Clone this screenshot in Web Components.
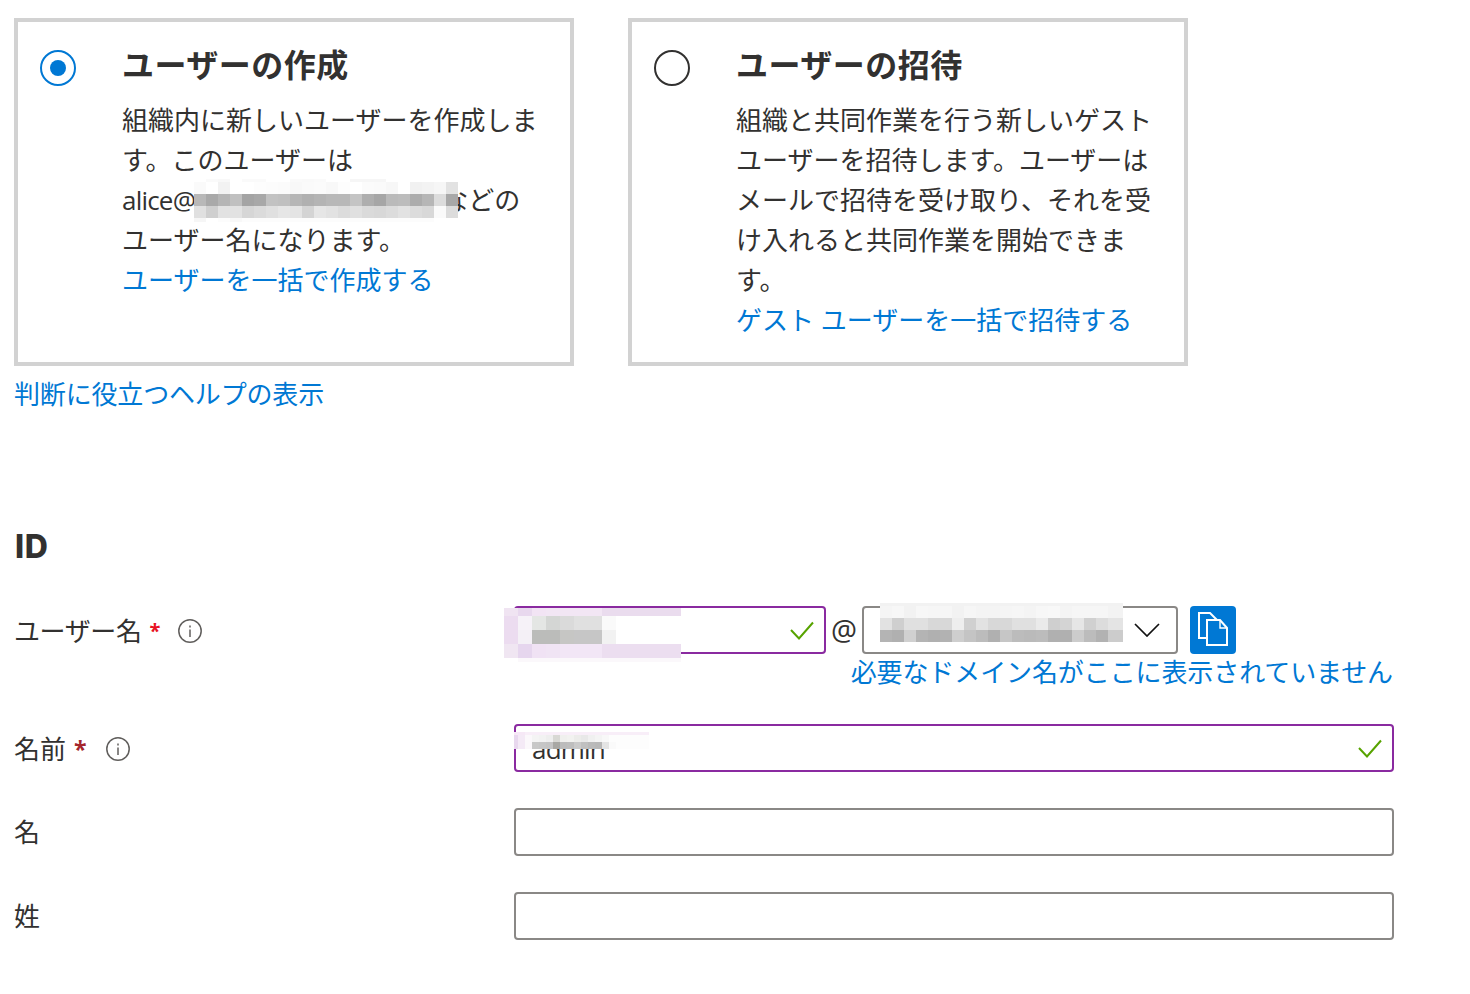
<!DOCTYPE html>
<html lang="ja">
<head>
<meta charset="utf-8">
<title>新しいユーザー</title>
<style>
  html, body { margin: 0; background: #fff; }
  body {
    font: 26px/40px "Open Sans", "Noto Sans CJK JP", sans-serif;
    color: #323130;
  }
</style>
</head>
<body>
<user-page></user-page>

<script>
// mosaic used where the original screenshot hides a value
class PixelPatch extends HTMLElement {
  constructor() {
    super()
    this.attachShadow({ mode: 'open' })
  }

  connectedCallback() {
    const w = this.getAttribute('cell')
    const first = this.getAttribute('first')
    const rows = this.getAttribute('data').trim().split('|').map(r => r.trim().split(/\s+/))
    const heights = this.getAttribute('heights')
    const cols = first ? `${first}px repeat(40, ${w}px)` : `repeat(40, ${w}px)`
    const cells = rows.map((row, y) => row.map((c, x) => {
      const hex = c.length === 2 ? c + c + c : c
      return `<i style="grid-row:${y + 1};grid-column:${x + 1};background:#${hex}"></i>`
    }).join('')).join('')
    this.shadowRoot.innerHTML = `
      <style>
        :host {
          position: absolute;
          display: grid;
          overflow: hidden;
          grid-template-columns: ${cols};
          grid-template-rows: ${heights.split(' ').map(h => h + 'px').join(' ')};
          width: ${this.getAttribute('width')}px;
          left: ${this.getAttribute('x')}px;
          top: ${this.getAttribute('y')}px;
          z-index: 2;
        }
      </style>
      ${cells}
    `
  }
}

class TypeCard extends HTMLElement {
  constructor() {
    super()
    this.attachShadow({ mode: 'open' })
  }

  connectedCallback() {
    this.shadowRoot.innerHTML = this.html
  }

  get html() {
    const on = this.hasAttribute('selected')
    return `
      <style>
        :host {
          display: flex;
          box-sizing: border-box;
          width: 560px;
          height: 348px;
          padding: 24px 0 0 22px;
          border: 4px solid #d2d2d2;
        }
        .radio {
          flex: none;
          box-sizing: border-box;
          display: flex;
          align-items: center;
          justify-content: center;
          width: 36px;
          height: 36px;
          margin: 4px 46px 0 0;
          border-radius: 50%;
          border: 2px solid ${on ? '#0078d4' : '#323130'};
        }
        .dot {
          width: 16px;
          height: 16px;
          border-radius: 50%;
          background: ${on ? '#0078d4' : 'transparent'};
        }
        h2 {
          margin: -1px 0 15px;
          font-size: 32px;
          line-height: 40px;
          font-weight: 700;
          letter-spacing: 0.5px;
        }
        .text {
          white-space: nowrap;
        }
      </style>
      <div class="radio"><div class="dot"></div></div>
      <div class="text">
        <h2>${this.getAttribute('heading')}</h2>
        <slot></slot>
      </div>
    `
  }
}

class LinkText extends HTMLElement {
  constructor() {
    super()
    this.attachShadow({ mode: 'open' })
    this.shadowRoot.innerHTML = `
      <style>
        :host { display: block; color: #0078d4; white-space: nowrap; cursor: pointer; }
      </style>
      <slot></slot>
    `
  }
}

class FormRow extends HTMLElement {
  constructor() {
    super()
    this.attachShadow({ mode: 'open' })
  }

  connectedCallback() {
    const star = this.getAttribute('star')
    const info = this.hasAttribute('info')
    const wide = this.hasAttribute('wide')
    this.shadowRoot.innerHTML = `
      <style>
        :host {
          display: grid;
          grid-template-columns: 500px 880px;
          margin-top: ${this.getAttribute('gap') || 36}px;
        }
        .label {
          display: flex;
          align-items: center;
          box-sizing: border-box;
          height: 48px;
          padding-top: ${star ? 2 : 0}px;
          white-space: nowrap;
        }
        .name { letter-spacing: ${wide ? 0 : -0.4}px; }
        .star {
          margin: 0 18px 0 8px;
          font-size: 20px;
          font-weight: 700;
          color: ${star};
          line-height: 26px;
        }
        .star.wide {
          margin: 0 19px 0 8px;
          font-size: 23px;
        }
        svg { display: block; }
      </style>
      <div class="label">
        <span class="name">${this.getAttribute('label')}</span>
        ${star ? `<span class="star ${wide ? 'wide' : ''}">*</span>` : ''}
        ${info ? `
          <svg width="24" height="24" viewBox="0 0 24 24" fill="none" stroke="#605e5c" stroke-width="1.5">
            <circle cx="12" cy="12" r="11.2"/>
            <path d="M12 10.5V18"/>
            <path d="M12 6.6v1.8"/>
          </svg>` : ''}
      </div>
      <div><slot></slot></div>
    `
  }
}

class TextField extends HTMLElement {
  constructor() {
    super()
    this.attachShadow({ mode: 'open' })
  }

  connectedCallback() {
    const valid = this.hasAttribute('valid')
    this.shadowRoot.innerHTML = `
      <style>
        :host {
          display: flex;
          align-items: center;
          justify-content: space-between;
          position: relative;
          box-sizing: border-box;
          height: 48px;
          padding: 0 10px 0 16px;
          border: 2px solid ${valid ? '#8a2aa0' : '#8a8886'};
          border-radius: 4px;
          background: #fff;
        }
        svg { display: block; }
        .value {
          padding-top: 1px;
          line-height: 44px;
          letter-spacing: -0.8px;
        }
      </style>
      <span class="value"><slot name="value"></slot></span>
      <slot></slot>
      ${valid ? `
        <svg width="24" height="19" viewBox="0 0 24 19" fill="none" stroke="#57a300" stroke-width="2">
          <path d="M1 9l8 8.500L23 1.500"/>
        </svg>` : ''}
    `
  }
}

class DomainSelect extends HTMLElement {
  constructor() {
    super()
    this.attachShadow({ mode: 'open' })
    this.shadowRoot.innerHTML = `
      <style>
        :host {
          display: flex;
          align-items: center;
          justify-content: flex-end;
          position: relative;
          box-sizing: border-box;
          width: 316px;
          height: 48px;
          padding-right: 16px;
          border: 2px solid #8a8886;
          border-radius: 4px;
        }
        svg { display: block; }
      </style>
      <slot></slot>
      <svg width="26" height="14" viewBox="0 0 26 14" fill="none" stroke="#111" stroke-width="1.7">
        <path d="M1 1l12 12L25 1"/>
      </svg>
    `
  }
}

class CopyButton extends HTMLElement {
  constructor() {
    super()
    this.attachShadow({ mode: 'open' })
    this.shadowRoot.innerHTML = `
      <style>
        :host {
          display: block;
          width: 46px;
          height: 48px;
          border-radius: 4px;
          background: #0078d4;
        }
        svg { display: block; }
      </style>
      <svg width="46" height="48" viewBox="0 0 46 48" fill="none" stroke="#fff" stroke-width="2">
        <path d="M17 32H9V7h11l7 7"/>
        <path d="M17 14h13l7 8v17H17z"/>
        <path d="M30 14v8h7" stroke-width="1.4"/>
      </svg>
    `
  }
}

class UserPage extends HTMLElement {
  constructor() {
    super()
    this.attachShadow({ mode: 'open' })
  }

  connectedCallback() {
    this.shadowRoot.innerHTML = this.html
  }

  get html() {
    return `
      <style>
        :host {
          display: block;
          padding: 18px 0 0 14px;
        }
        .cards {
          display: flex;
          gap: 54px;
        }
        .help {
          margin-top: 8px;
          letter-spacing: -0.17px;
        }
        h3 {
          margin: 113px 0 39px;
          padding-left: 1px;
          font-family: Inter, sans-serif;
          font-size: 32px;
          line-height: 40px;
          font-weight: 800;
          letter-spacing: 0.5px;
        }
        .mail {
          letter-spacing: -0.8px;
        }
        .redact {
          display: inline-block;
          position: relative;
          vertical-align: top;
          width: 247px;
          height: 40px;
        }
        .user {
          display: flex;
        }
        .user text-field {
          width: 312px;
        }
        .at {
          width: 36px;
          line-height: 48px;
          text-align: center;
          font-size: 29px;
        }
        .user copy-button {
          margin-left: 12px;
        }
        .domain-link {
          margin-top: -2px;
          padding-right: 1px;
          text-align: right;
          letter-spacing: -0.1px;
        }
      </style>

      <div class="cards">
        <type-card selected heading="ユーザーの作成">
          組織内に新しいユーザーを作成しま<br>
          す。このユーザーは<br>
          <span class="mail">alice@</span><span class="redact"><pixel-patch cell="12" width="264" x="-1" y="-1" heights="3 12 12 12 4" data="
            ff fa f8 ff fa fa ff ff fa f9 fa ff ff f6 f6 f6 ff ff ff ff ff ff |
            fa ff f2 ff ff fd fc fb f8 fa fb f8 fd ff fb fa f7 ff f1 f3 f6 e2 |
            b8 a9 b5 c0 a4 a8 c2 c0 b6 b0 b4 b8 b8 c4 ae a6 ba bc ac b6 dc a8 |
            e0 cf e2 e2 d6 db e0 e6 e4 d4 e6 e2 dc e0 da d8 dc e2 dc d8 fa dc |
            f6 ff fc f8 fc fc fc fc fc fc fc fc fc fc fc fc fc fc fc fc ff ff
          "></pixel-patch></span>などの<br>
          ユーザー名になります。
          <link-text>ユーザーを一括で作成する</link-text>
        </type-card>
        <type-card heading="ユーザーの招待">
          組織と共同作業を行う新しいゲスト<br>
          ユーザーを招待します。ユーザーは<br>
          メールで招待を受け取り、それを受<br>
          け入れると共同作業を開始できま<br>
          す。
          <link-text>ゲスト ユーザーを一括で招待する</link-text>
        </type-card>
      </div>

      <link-text class="help">判断に役立つヘルプの表示</link-text>

      <h3>ID</h3>

      <form-row label="ユーザー名" star="#e81123" info gap="0">
        <div class="user">
          <text-field valid>
            <pixel-patch cell="14" width="177" x="-12" y="0" heights="8 14 14 14 4" data="
              f0e4f2 e8d8ee f2e4f4 f2e6f4 f2e6f4 f2e6f4 f2e6f4 eadcee eadcee eadcee eadcee eadcee eadcee |
              ecdcf0 f6f2f8 e4e6e4 d4d6d4 dadada e0e0e0 e0e0e0 fafafa ff ff ff ff ff |
              ecdcf0 f4f0f6 bbbcba bbbcba c6c6c4 c6c6c6 c6c6c6 f2f2f2 ff ff ff ff ff |
              f0e6f2 e6d6ee f0e2f4 f0e4f4 f2e6f6 f2e6f6 f2e6f6 ecdef0 ecdef0 ecdef0 ecdef0 ecdef0 ecdef0 |
              ff fbf8fb fbf8fb fbf8fb fbf8fb fbf8fb fbf8fb fbf8fb fbf8fb fbf8fb fbf8fb fbf8fb fbf8fb
            "></pixel-patch>
          </text-field>
          <span class="at">@</span>
          <domain-select>
            <pixel-patch cell="12" width="243" x="16" y="-5" heights="3 12 12 12" data="
              f2 f2 f2 f2 f2 f2 f2 f2 f2 f2 f2 f2 f2 f2 f2 f2 f2 f2 f2 f2 f2 |
              f5 f7 f2 f7 f6 f6 f2 f6 f4 f4 f5 f6 f4 f7 f8 f4 f6 f6 f6 f3 f3 |
              e2 cf e0 e0 d8 d8 ee d0 e2 d8 d8 e0 e0 ea cf d4 e6 d0 dc e4 e4 |
              b4 b0 d0 b4 b0 b2 ce c4 bc b0 c6 bc ba bc b0 b0 cc bc b2 cc cc
            "></pixel-patch>
          </domain-select>
          <copy-button></copy-button>
        </div>
        <link-text class="domain-link">必要なドメイン名がここに表示されていません</link-text>
      </form-row>

      <form-row label="名前" star="#a4262c" wide info gap="32">
        <text-field valid>
          <span slot="value">admin</span>
          <pixel-patch cell="7" first="4" width="135" x="-2" y="6" heights="3 7 7" data="
            f6e8f6 f6e8f6 f8eef8 f8eef8 f8eef8 f8eef8 f8eef8 f8eef8 f8eef8 f8eef8 f8eef8 f8eef8 f8eef8 f8eef8 f8eef8 f8eef8 f8eef8 f8eef8 f8eef8 f8eef8 |
            e8d8ee f4eaf6 fbf8fb f4 f2 ee d8d8d4 f0f0ee f2f2f0 ececea e8 f0 f4 f8 fd fd fd fd fd fd |
            e8d8ee f4eaf6 fbf8fb c8 c6 c4 a8a8a4 bc be ca c0 ba b8 e4 fa fd fd fd fd fd
          "></pixel-patch>
        </text-field>
      </form-row>

      <form-row label="名"><text-field></text-field></form-row>
      <form-row label="姓"><text-field></text-field></form-row>
    `
  }
}

customElements.define('pixel-patch', PixelPatch)
customElements.define('type-card', TypeCard)
customElements.define('link-text', LinkText)
customElements.define('form-row', FormRow)
customElements.define('text-field', TextField)
customElements.define('domain-select', DomainSelect)
customElements.define('copy-button', CopyButton)
customElements.define('user-page', UserPage)
</script>
</body>
</html>
